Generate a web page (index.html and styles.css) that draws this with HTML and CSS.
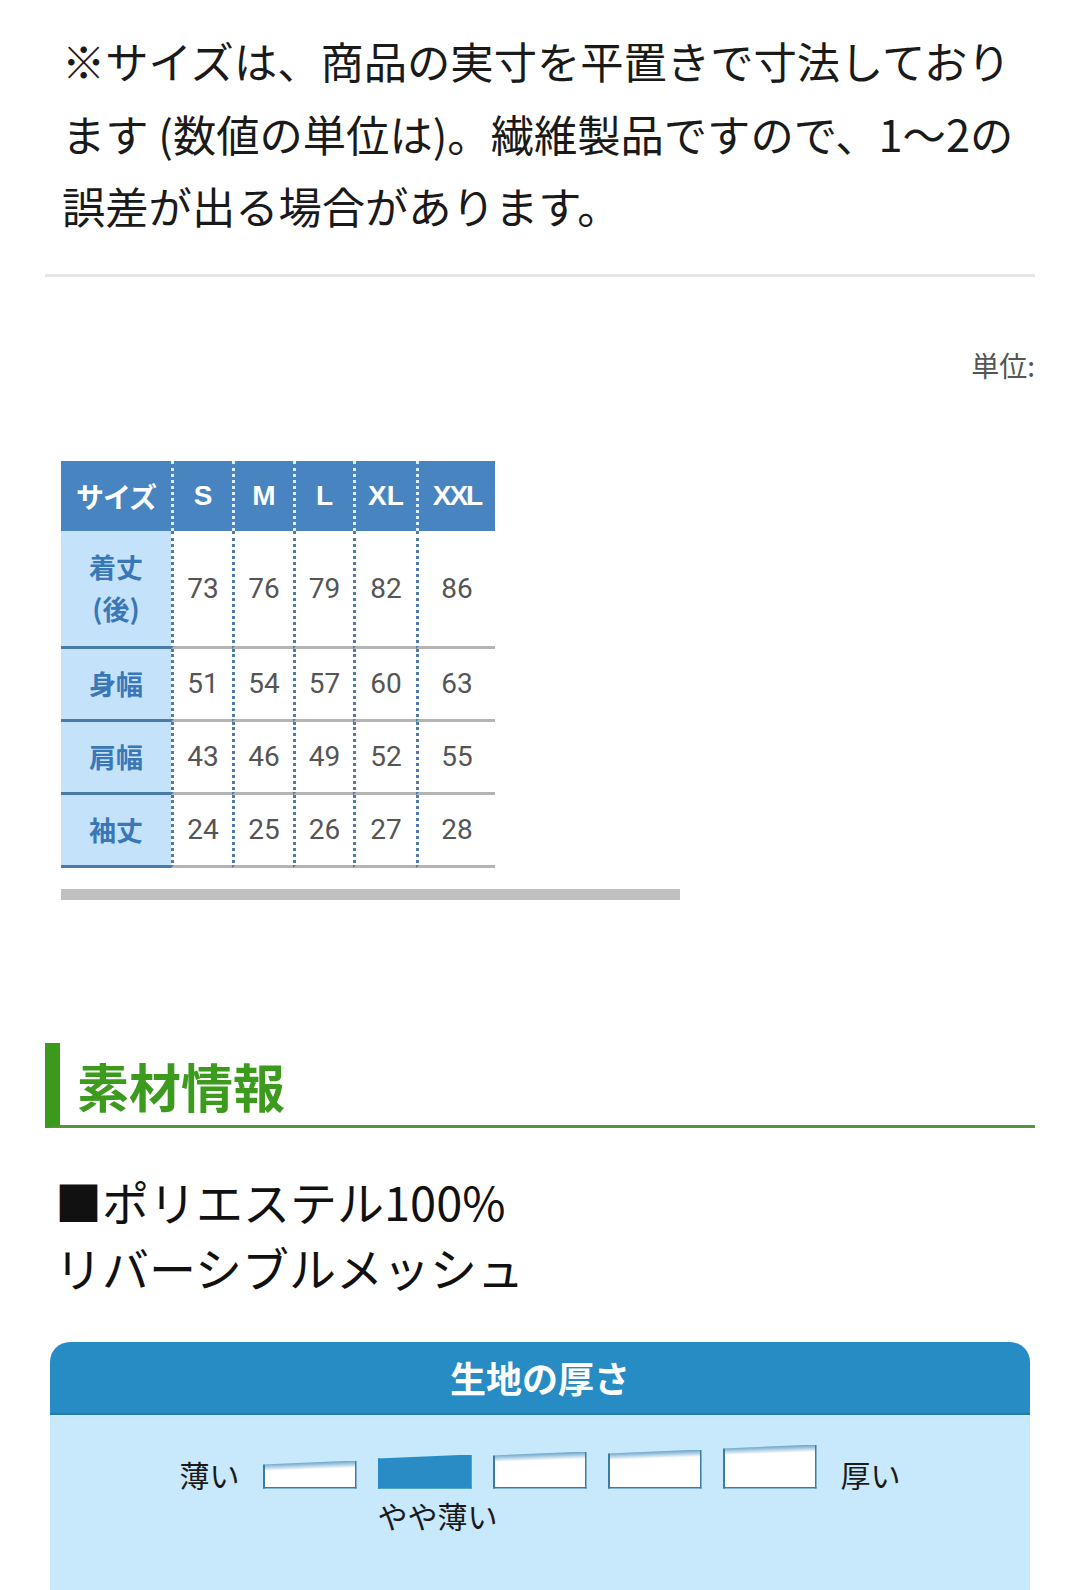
FILE: index.html
```html
<!DOCTYPE html>
<html lang="ja">
<head>
<meta charset="utf-8">
<title>サイズ・素材情報</title>
<link rel="stylesheet" href="styles.css">
</head>
<body>
<div class="page">
  <p class="note">※サイズは、商品の実寸を平置きで寸法しております (数値の単位は)。繊維製品ですので、1〜2の誤差が出る場合があります。</p>
  <hr class="divider">
  <p class="unit">単位:</p>

  <div class="table-scroll">
    <table class="size-table">
      <colgroup>
        <col class="c-label">
        <col class="c-s">
        <col class="c-m">
        <col class="c-l">
        <col class="c-xl">
        <col class="c-xxl">
      </colgroup>
      <thead>
        <tr class="head-row">
          <th class="corner">サイズ</th>
          <th>S</th>
          <th>M</th>
          <th>L</th>
          <th>XL</th>
          <th class="xxl">XXL</th>
        </tr>
      </thead>
      <tbody>
        <tr class="row-tall">
          <th>着丈<br>(後)</th>
          <td>73</td><td>76</td><td>79</td><td>82</td><td>86</td>
        </tr>
        <tr class="row">
          <th>身幅</th>
          <td>51</td><td>54</td><td>57</td><td>60</td><td>63</td>
        </tr>
        <tr class="row">
          <th>肩幅</th>
          <td>43</td><td>46</td><td>49</td><td>52</td><td>55</td>
        </tr>
        <tr class="row">
          <th>袖丈</th>
          <td>24</td><td>25</td><td>26</td><td>27</td><td>28</td>
        </tr>
      </tbody>
    </table>
    <div class="scrollbar"></div>
  </div>

  <h2 class="section-title">素材情報</h2>
  <p class="material">■ポリエステル100%<br>リバーシブルメッシュ</p>

  <section class="thickness">
    <h3 class="thickness-title">生地の厚さ</h3>
    <div class="thickness-body">
      <div class="scale">
        <span class="end-label first">薄い</span>
        <div class="step"><div class="box-area"><div class="tbox lv1"></div></div></div>
        <div class="step"><div class="box-area"><div class="tbox lv2 active"></div></div><span class="step-label">やや薄い</span></div>
        <div class="step"><div class="box-area"><div class="tbox lv3"></div></div></div>
        <div class="step"><div class="box-area"><div class="tbox lv4"></div></div></div>
        <div class="step"><div class="box-area"><div class="tbox lv5"></div></div></div>
        <span class="end-label last">厚い</span>
      </div>
    </div>
  </section>
</div>
</body>
</html>
```
FILE: styles.css
```css
html, body {
  margin: 0;
  padding: 0;
  background: #ffffff;
}

body {
  font-family: "Noto Sans CJK JP", "Noto Sans", sans-serif;
  color: #222222;
}

.page {
  padding: 0 45px;
}

.note {
  margin: 0;
  padding: 24px 12px 0 17px;
  font-size: 43.3px;
  line-height: 72.5px;
  color: #1a1a1a;
}

.divider {
  margin: 32px 0 0 0;
  border: 0;
  height: 3px;
  background: #e6e6e6;
}

.unit {
  margin: 68px 0 0 0;
  text-align: right;
  font-size: 28px;
  line-height: 40px;
  color: #555555;
}

.table-scroll {
  margin-top: 76px;
  padding-left: 16px;
}

.size-table {
  border-collapse: separate;
  border-spacing: 0;
  table-layout: fixed;
  width: 434px;
}

.c-label { width: 110px; }
.c-s { width: 61px; }
.c-m { width: 61px; }
.c-l { width: 60px; }
.c-xl { width: 63px; }
.c-xxl { width: 79px; }

.size-table th,
.size-table td {
  padding: 0;
  text-align: center;
  vertical-align: middle;
}

.head-row {
  height: 70px;
}

.head-row th {
  background: #4884c0;
  color: #ffffff;
  font-family: "Liberation Sans", "Noto Sans CJK JP", sans-serif;
  font-weight: 700;
  font-size: 28px;
  line-height: 34px;
  border-left: 3px dotted #dcefff;
}

.head-row th.corner {
  border-left: 0;
  font-family: "Noto Sans CJK JP", sans-serif;
  letter-spacing: -1px;
}

.head-row th.xxl {
  letter-spacing: -2px;
}

.row-tall {
  height: 118px;
}

.row {
  height: 73px;
}

.size-table tbody th {
  background: #c4e2fa;
  color: #3a77b6;
  font-weight: 700;
  font-size: 27px;
  line-height: 42px;
  border-bottom: 3px solid #4a7aa8;
}

.size-table tbody td {
  font-family: Roboto, "Noto Sans", sans-serif;
  font-size: 28px;
  color: #555555;
  border-left: 3px dotted #4e7ca6;
  border-bottom: 3px solid #b4b4b4;
}

.scrollbar {
  margin-top: 21px;
  width: 619px;
  height: 11px;
  background: #c0c0c0;
}

.section-title {
  margin: 143px 0 0 0;
  padding: 13px 0 9px 17px;
  border-left: 15px solid #3b9a1c;
  border-bottom: 3px solid #55943a;
  color: #3c9b1d;
  font-size: 52px;
  line-height: 60px;
  font-weight: 700;
}

.material {
  margin: 40px 0 0 0;
  padding-left: 10px;
  font-size: 47px;
  line-height: 66px;
  color: #111111;
}

.thickness {
  margin: 42px 5px 0 5px;
  border-radius: 20px 20px 0 0;
  overflow: hidden;
}

.thickness-title {
  margin: 0;
  height: 71px;
  line-height: 71px;
  background: #288cc4;
  border-bottom: 2px solid #2a78a4;
  color: #ffffff;
  text-align: center;
  font-size: 36px;
  font-weight: 700;
}

.thickness-body {
  background: #c8e8fc;
  padding-top: 28px;
  min-height: 200px;
}

.scale {
  display: flex;
  justify-content: center;
  align-items: flex-start;
  gap: 21px;
}

.end-label {
  margin-top: 16px;
  font-size: 30px;
  line-height: 30px;
  color: #1a1a1a;
  white-space: nowrap;
}

.end-label.first {
  margin-right: 2px;
}

.end-label.last {
  margin-left: 3px;
}

.step {
  width: 94px;
  display: flex;
  flex-direction: column;
}

.box-area {
  height: 46px;
  display: flex;
  align-items: flex-end;
}

.tbox {
  box-sizing: border-box;
  width: 94px;
  background: linear-gradient(178deg, #3f84ad 0, #7fb3d3 4px, #ffffff 10px, #ffffff 100%);
  border: 2px solid #3b7ca3;
  border-top: 0;
  clip-path: polygon(0 4px, 100% 0, 100% 100%, 0 100%);
}

.tbox.lv1 { height: 28px; }
.tbox.lv2 { height: 34px; }
.tbox.lv3 { height: 37px; }
.tbox.lv4 { height: 39px; }
.tbox.lv5 { height: 44px; }

.tbox.active {
  background: #2a8cc4;
  border-color: #2a8cc4;
}

.step-label {
  margin-top: 9px;
  font-size: 30px;
  line-height: 34px;
  color: #1a1a1a;
  white-space: nowrap;
}
```
